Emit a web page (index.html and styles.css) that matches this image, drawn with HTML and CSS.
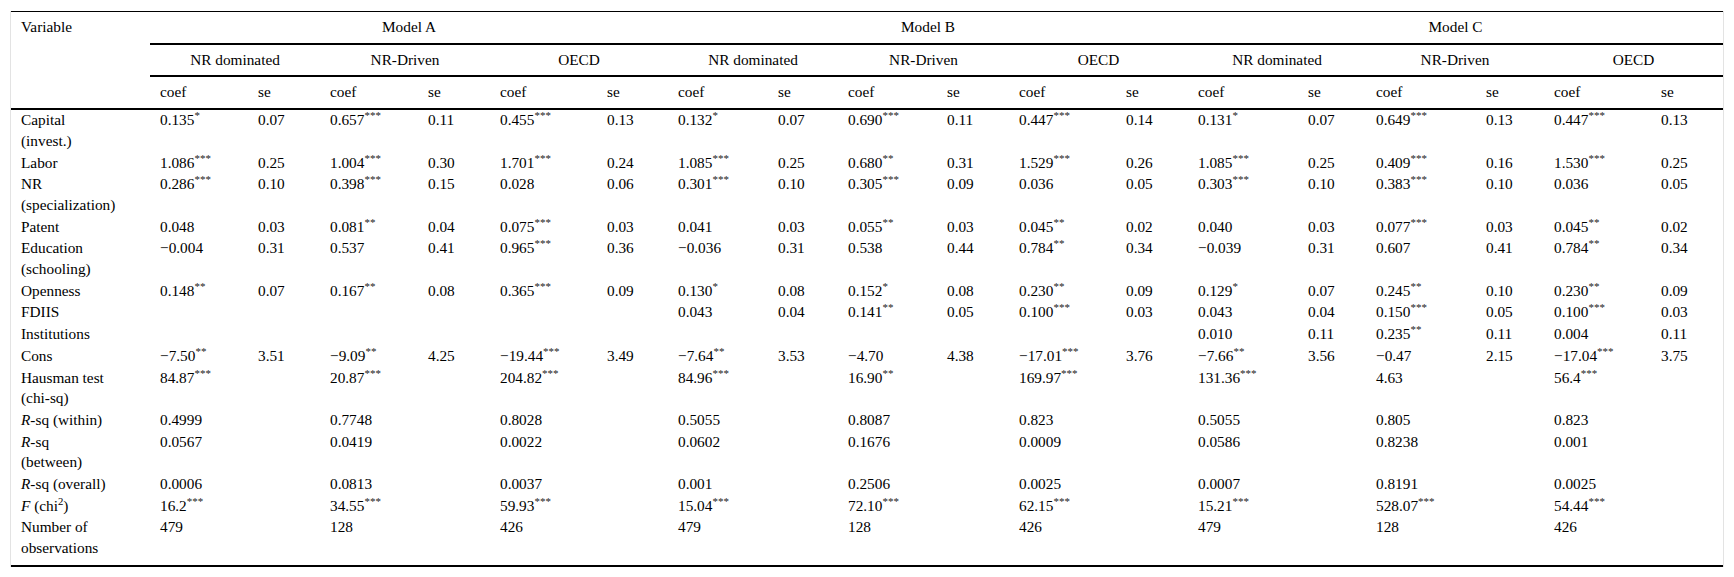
FILE: index.html
```html
<!DOCTYPE html>
<html>
<head>
<meta charset="utf-8">
<link rel="stylesheet" href="styles.css">
</head>
<body>
<div class="wrap">
<table class="tbl">
<colgroup>
<col><col><col><col><col><col><col><col><col><col><col><col><col><col><col><col><col><col><col>
</colgroup>
<thead>
<tr class="h1">
<th rowspan="3" class="var">Variable</th>
<th colspan="6" class="grp">Model A</th>
<th colspan="6" class="grp">Model B</th>
<th colspan="6" class="grp">Model C</th>
</tr>
<tr class="h2">
<th colspan="2" class="grp">NR dominated</th>
<th colspan="2" class="grp">NR-Driven</th>
<th colspan="2" class="grp">OECD</th>
<th colspan="2" class="grp">NR dominated</th>
<th colspan="2" class="grp">NR-Driven</th>
<th colspan="2" class="grp">OECD</th>
<th colspan="2" class="grp">NR dominated</th>
<th colspan="2" class="grp">NR-Driven</th>
<th colspan="2" class="grp">OECD</th>
</tr>
<tr class="h3">
<th>coef</th><th>se</th><th>coef</th><th>se</th><th>coef</th><th>se</th>
<th>coef</th><th>se</th><th>coef</th><th>se</th><th>coef</th><th>se</th>
<th>coef</th><th>se</th><th>coef</th><th>se</th><th>coef</th><th>se</th>
</tr>
</thead>
<tbody>
<tr><td class="lab">Capital (invest.)</td>
<td>0.135<sup>*</sup></td><td>0.07</td><td>0.657<sup>***</sup></td><td>0.11</td><td>0.455<sup>***</sup></td><td>0.13</td>
<td>0.132<sup>*</sup></td><td>0.07</td><td>0.690<sup>***</sup></td><td>0.11</td><td>0.447<sup>***</sup></td><td>0.14</td>
<td>0.131<sup>*</sup></td><td>0.07</td><td>0.649<sup>***</sup></td><td>0.13</td><td>0.447<sup>***</sup></td><td>0.13</td></tr>
<tr><td class="lab">Labor</td>
<td>1.086<sup>***</sup></td><td>0.25</td><td>1.004<sup>***</sup></td><td>0.30</td><td>1.701<sup>***</sup></td><td>0.24</td>
<td>1.085<sup>***</sup></td><td>0.25</td><td>0.680<sup>**</sup></td><td>0.31</td><td>1.529<sup>***</sup></td><td>0.26</td>
<td>1.085<sup>***</sup></td><td>0.25</td><td>0.409<sup>***</sup></td><td>0.16</td><td>1.530<sup>***</sup></td><td>0.25</td></tr>
<tr><td class="lab">NR (specialization)</td>
<td>0.286<sup>***</sup></td><td>0.10</td><td>0.398<sup>***</sup></td><td>0.15</td><td>0.028</td><td>0.06</td>
<td>0.301<sup>***</sup></td><td>0.10</td><td>0.305<sup>***</sup></td><td>0.09</td><td>0.036</td><td>0.05</td>
<td>0.303<sup>***</sup></td><td>0.10</td><td>0.383<sup>***</sup></td><td>0.10</td><td>0.036</td><td>0.05</td></tr>
<tr><td class="lab">Patent</td>
<td>0.048</td><td>0.03</td><td>0.081<sup>**</sup></td><td>0.04</td><td>0.075<sup>***</sup></td><td>0.03</td>
<td>0.041</td><td>0.03</td><td>0.055<sup>**</sup></td><td>0.03</td><td>0.045<sup>**</sup></td><td>0.02</td>
<td>0.040</td><td>0.03</td><td>0.077<sup>***</sup></td><td>0.03</td><td>0.045<sup>**</sup></td><td>0.02</td></tr>
<tr><td class="lab">Education (schooling)</td>
<td>−0.004</td><td>0.31</td><td>0.537</td><td>0.41</td><td>0.965<sup>***</sup></td><td>0.36</td>
<td>−0.036</td><td>0.31</td><td>0.538</td><td>0.44</td><td>0.784<sup>**</sup></td><td>0.34</td>
<td>−0.039</td><td>0.31</td><td>0.607</td><td>0.41</td><td>0.784<sup>**</sup></td><td>0.34</td></tr>
<tr><td class="lab">Openness</td>
<td>0.148<sup>**</sup></td><td>0.07</td><td>0.167<sup>**</sup></td><td>0.08</td><td>0.365<sup>***</sup></td><td>0.09</td>
<td>0.130<sup>*</sup></td><td>0.08</td><td>0.152<sup>*</sup></td><td>0.08</td><td>0.230<sup>**</sup></td><td>0.09</td>
<td>0.129<sup>*</sup></td><td>0.07</td><td>0.245<sup>**</sup></td><td>0.10</td><td>0.230<sup>**</sup></td><td>0.09</td></tr>
<tr><td class="lab">FDIIS</td>
<td></td><td></td><td></td><td></td><td></td><td></td>
<td>0.043</td><td>0.04</td><td>0.141<sup>**</sup></td><td>0.05</td><td>0.100<sup>***</sup></td><td>0.03</td>
<td>0.043</td><td>0.04</td><td>0.150<sup>***</sup></td><td>0.05</td><td>0.100<sup>***</sup></td><td>0.03</td></tr>
<tr><td class="lab">Institutions</td>
<td></td><td></td><td></td><td></td><td></td><td></td>
<td></td><td></td><td></td><td></td><td></td><td></td>
<td>0.010</td><td>0.11</td><td>0.235<sup>**</sup></td><td>0.11</td><td>0.004</td><td>0.11</td></tr>
<tr><td class="lab">Cons</td>
<td>−7.50<sup>**</sup></td><td>3.51</td><td>−9.09<sup>**</sup></td><td>4.25</td><td>−19.44<sup>***</sup></td><td>3.49</td>
<td>−7.64<sup>**</sup></td><td>3.53</td><td>−4.70</td><td>4.38</td><td>−17.01<sup>***</sup></td><td>3.76</td>
<td>−7.66<sup>**</sup></td><td>3.56</td><td>−0.47</td><td>2.15</td><td>−17.04<sup>***</sup></td><td>3.75</td></tr>
<tr><td class="lab">Hausman test (chi-sq)</td>
<td>84.87<sup>***</sup></td><td></td><td>20.87<sup>***</sup></td><td></td><td>204.82<sup>***</sup></td><td></td>
<td>84.96<sup>***</sup></td><td></td><td>16.90<sup>**</sup></td><td></td><td>169.97<sup>***</sup></td><td></td>
<td>131.36<sup>***</sup></td><td></td><td>4.63</td><td></td><td>56.4<sup>***</sup></td><td></td></tr>
<tr><td class="lab"><i>R</i>-sq (within)</td>
<td>0.4999</td><td></td><td>0.7748</td><td></td><td>0.8028</td><td></td>
<td>0.5055</td><td></td><td>0.8087</td><td></td><td>0.823</td><td></td>
<td>0.5055</td><td></td><td>0.805</td><td></td><td>0.823</td><td></td></tr>
<tr><td class="lab"><i>R</i>-sq (between)</td>
<td>0.0567</td><td></td><td>0.0419</td><td></td><td>0.0022</td><td></td>
<td>0.0602</td><td></td><td>0.1676</td><td></td><td>0.0009</td><td></td>
<td>0.0586</td><td></td><td>0.8238</td><td></td><td>0.001</td><td></td></tr>
<tr><td class="lab"><i>R</i>-sq (overall)</td>
<td>0.0006</td><td></td><td>0.0813</td><td></td><td>0.0037</td><td></td>
<td>0.001</td><td></td><td>0.2506</td><td></td><td>0.0025</td><td></td>
<td>0.0007</td><td></td><td>0.8191</td><td></td><td>0.0025</td><td></td></tr>
<tr><td class="lab"><i>F</i> (chi<sup class="pw">2</sup>)</td>
<td>16.2<sup>***</sup></td><td></td><td>34.55<sup>***</sup></td><td></td><td>59.93<sup>***</sup></td><td></td>
<td>15.04<sup>***</sup></td><td></td><td>72.10<sup>***</sup></td><td></td><td>62.15<sup>***</sup></td><td></td>
<td>15.21<sup>***</sup></td><td></td><td>528.07<sup>***</sup></td><td></td><td>54.44<sup>***</sup></td><td></td></tr>
<tr class="last"><td class="lab">Number of observations</td>
<td>479</td><td></td><td>128</td><td></td><td>426</td><td></td>
<td>479</td><td></td><td>128</td><td></td><td>426</td><td></td>
<td>479</td><td></td><td>128</td><td></td><td>426</td><td></td></tr>
</tbody>
</table>
</div>
</body>
</html>
```
FILE: styles.css
```css
html, body {
  margin: 0;
  padding: 0;
  background: #ffffff;
}

.wrap {
  margin: 11px 10px 0 10px;
  border-left: 1px solid #e3e3e3;
  border-right: 1px solid #e3e3e3;
}

.tbl {
  width: 100%;
  table-layout: fixed;
  border-collapse: collapse;
  font-family: "Liberation Serif", "Times New Roman", serif;
  font-size: 15.3px;
  line-height: 20.7px;
  color: #000;
  border-top: 1px solid #000;
  border-bottom: 2px solid #000;
}

.tbl col:nth-child(1) { width: 139px; }
.tbl col:nth-child(2) { width: 98px; }
.tbl col:nth-child(3) { width: 72px; }
.tbl col:nth-child(4) { width: 98px; }
.tbl col:nth-child(5) { width: 72px; }
.tbl col:nth-child(6) { width: 107px; }
.tbl col:nth-child(7) { width: 71px; }
.tbl col:nth-child(8) { width: 100px; }
.tbl col:nth-child(9) { width: 70px; }
.tbl col:nth-child(10) { width: 99px; }
.tbl col:nth-child(11) { width: 72px; }
.tbl col:nth-child(12) { width: 107px; }
.tbl col:nth-child(13) { width: 72px; }
.tbl col:nth-child(14) { width: 110px; }
.tbl col:nth-child(15) { width: 68px; }
.tbl col:nth-child(16) { width: 110px; }
.tbl col:nth-child(17) { width: 68px; }
.tbl col:nth-child(18) { width: 107px; }
.tbl col:nth-child(19) { width: 72px; }

.tbl th {
  font-weight: normal;
  text-align: left;
  vertical-align: top;
  padding: 5px 10px 5px 10px;
}

.tbl th.grp {
  text-align: center;
  border-bottom: 2px solid #000;
}

.tbl th.var {
  padding-right: 40px;
  border-bottom: 2px solid #000;
}

.tbl .h3 th {
  border-bottom: 2px solid #000;
}

.tbl td {
  vertical-align: top;
  text-align: left;
  padding: 0 10px 1px 10px;
  white-space: nowrap;
}

.tbl td.lab {
  white-space: normal;
  padding-right: 40px;
}

.tbl .last td {
  padding-bottom: 6px;
}

.tbl sup {
  font-size: 0.72em;
  line-height: 0;
  vertical-align: 0.55em;
  color: #222;
}

.tbl sup.pw {
  font-size: 0.7em;
  color: #000;
}
```
